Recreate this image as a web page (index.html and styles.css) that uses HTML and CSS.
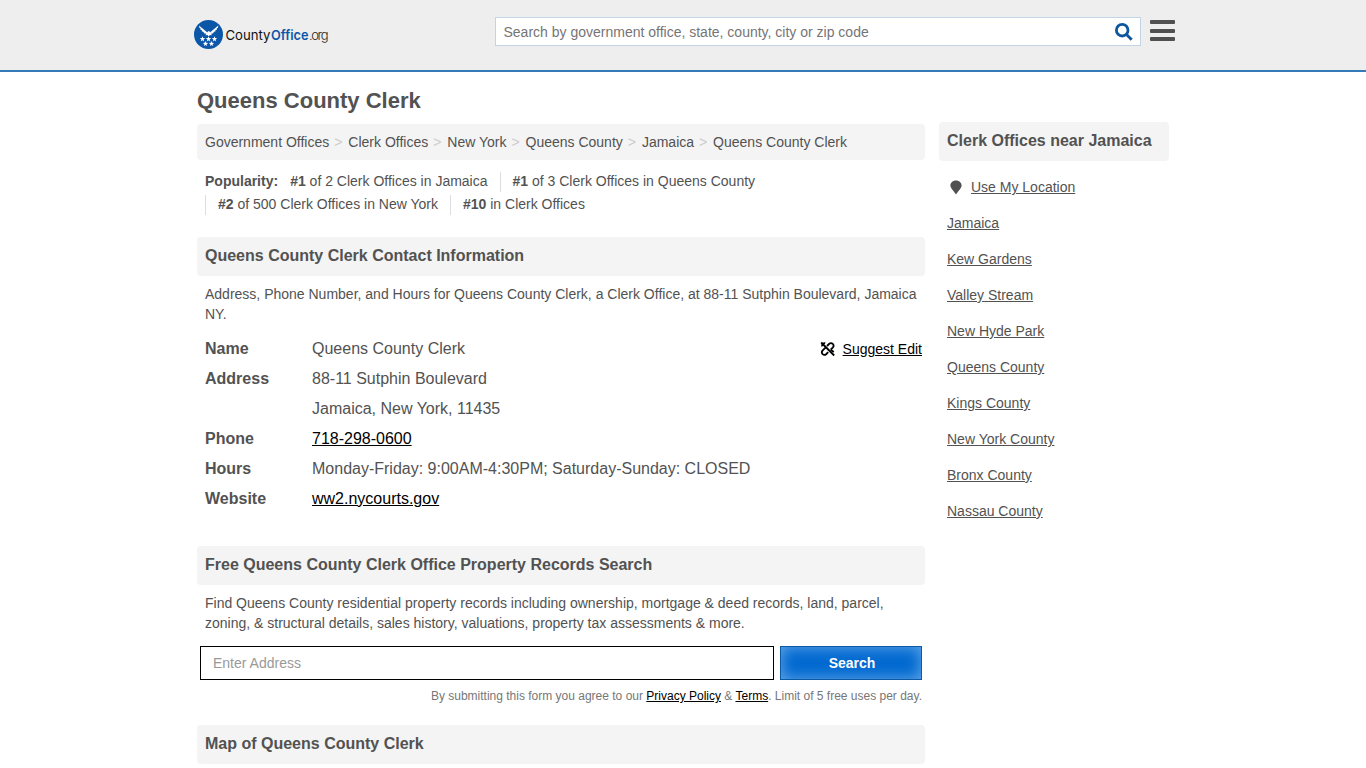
FILE: index.html
```html
<!DOCTYPE html>
<html lang="en">
<head>
    <meta charset="UTF-8">
    <title>Queens County Clerk - CountyOffice.org</title>
    <link rel="stylesheet" href="styles.css">
</head>
<body>
    <div class="header">
        <div class="header-inner">
            <a class="logo" href="#">
                <svg width="146" height="34" viewBox="0 0 146 34">
                    <circle cx="14.5" cy="14.5" r="14.5" fill="#0c56a8"/>
                    <path class="eagle" d="M5 5.500L11.300 10.800L13.300 12.600L14 11.200L15.600 11.300L16 12.500L18 10.800L24.300 5.500L23.800 8L22.800 8.300L22.900 9.800L21.500 10L21.400 11.500L19.800 11.700L19.300 13.200L17 13.800L18 15.300L16 15L14.700 16.300L13.400 15L11.300 15.300L12.400 13.800L10 13.200L9.500 11.700L7.900 11.500L7.800 10L6.400 9.800L6.500 8.300L5.500 8Z"/>
                    <g class="stars">
                        <path id="star" d="M8.500 16.200L9.200 18.100L11.200 18.200L9.600 19.500L10.200 21.400L8.500 20.300L6.800 21.400L7.400 19.500L5.800 18.200L7.800 18.100Z"/>
                        <use href="#star" x="6"/>
                        <use href="#star" x="12"/>
                        <use href="#star" x="3" y="4.700"/>
                        <use href="#star" x="9" y="4.700"/>
                    </g>
                    <text class="logo-county" x="31.500" y="20" textLength="45" lengthAdjust="spacingAndGlyphs">County</text>
                    <text class="logo-office" x="77" y="20" textLength="37.500" lengthAdjust="spacingAndGlyphs">Office</text>
                    <text class="logo-org" x="115" y="20">.org</text>
                </svg>
            </a>
            <form class="site-search">
                <input type="text" placeholder="Search by government office, state, county, city or zip code">
                <svg class="search-icon" width="18" height="18" viewBox="0 0 18 18">
                    <circle cx="7.200" cy="7.200" r="5.800"/>
                    <path d="M11.500 11.500L16.700 16.700"/>
                </svg>
            </form>
            <div class="menu-btn"><span></span><span></span><span></span></div>
        </div>
    </div>

    <div class="container">
        <div class="main">
            <h1>Queens County Clerk</h1>
            <ol class="breadcrumb">
                <li>Government Offices</li>
                <li>Clerk Offices</li>
                <li>New York</li>
                <li>Queens County</li>
                <li>Jamaica</li>
                <li>Queens County Clerk</li>
            </ol>
            <ul class="popularity">
                <li class="first"><b>Popularity:</b></li>
                <li class="first"><b>#1</b> of 2 Clerk Offices in Jamaica</li>
                <li><b>#1</b> of 3 Clerk Offices in Queens County</li>
                <li><b>#2</b> of 500 Clerk Offices in New York</li>
                <li><b>#10</b> in Clerk Offices</li>
            </ul>

            <h2>Queens County Clerk Contact Information</h2>
            <p class="intro">Address, Phone Number, and Hours for Queens County Clerk, a Clerk Office, at 88-11 Sutphin Boulevard, Jamaica NY.</p>
            <div class="contact">
                <dl class="info">
                    <dt>Name</dt><dd>Queens County Clerk</dd>
                    <dt>Address</dt><dd>88-11 Sutphin Boulevard<br>Jamaica, New York, 11435</dd>
                    <dt>Phone</dt><dd><a href="#">718-298-0600</a></dd>
                    <dt>Hours</dt><dd>Monday-Friday: 9:00AM-4:30PM; Saturday-Sunday: CLOSED</dd>
                    <dt>Website</dt><dd><a href="#">ww2.nycourts.gov</a></dd>
                </dl>
                <div class="suggest">
                    <svg width="16" height="16" viewBox="0 0 16 16">
                        <path d="M1.200 1.500L14.200 14.500"/>
                        <path d="M7 5L9 3C11.700 .6 15.100 4 12.700 6.700L10.700 8.700M8.200 11.200L6.400 13C3.700 15.400 .3 12 2.700 9.300L5.800 6.300M5.200 2.300C3.800 1.700 1.800 3 2.100 5.300M10.700 8.700L13.800 11"/>
                    </svg>
                    <a href="#">Suggest Edit</a>
                </div>
            </div>

            <h2>Free Queens County Clerk Office Property Records Search</h2>
            <p class="intro">Find Queens County residential property records including ownership, mortgage &amp; deed records, land, parcel, zoning, &amp; structural details, sales history, valuations, property tax assessments &amp; more.</p>
            <form class="property-search">
                <input type="text" placeholder="Enter Address">
                <button type="button">Search</button>
            </form>
            <p class="terms">By submitting this form you agree to our <a href="#">Privacy Policy</a> &amp; <a href="#">Terms</a>. Limit of 5 free uses per day.</p>

            <h2>Map of Queens County Clerk</h2>
        </div>

        <div class="sidebar">
            <h2>Clerk Offices near Jamaica</h2>
            <ul class="nearby">
                <li>
                    <svg class="pin" width="12" height="15" viewBox="0 0 12 15"><path d="M6 .5C9.200 .5 11.600 2.800 11.600 5.600C11.600 8.300 8.200 11 6 14.500C3.800 11 .4 8.300 .4 5.600C.4 2.800 2.800 .5 6 .5Z"/></svg>
                    <a href="#">Use My Location</a>
                </li>
                <li><a href="#">Jamaica</a></li>
                <li><a href="#">Kew Gardens</a></li>
                <li><a href="#">Valley Stream</a></li>
                <li><a href="#">New Hyde Park</a></li>
                <li><a href="#">Queens County</a></li>
                <li><a href="#">Kings County</a></li>
                <li><a href="#">New York County</a></li>
                <li><a href="#">Bronx County</a></li>
                <li><a href="#">Nassau County</a></li>
            </ul>
        </div>
    </div>
</body>
</html>
```

FILE: styles.css
```css
* {
    margin: 0;
    padding: 0;
    box-sizing: border-box;
}
html {
    overflow: hidden;
}
body {
    font: 14px/20px "Liberation Sans", Arial, sans-serif;
    color: #525252;
    background-color: #fff;
}
ul,ol {
    list-style: none;
}
svg {
    display: block;
}
a {
    color: #000;
}

/* header */
.header {
    height: 72px;
    background-color: #eee;
    border-bottom: 2px solid #337ab7;
}
.header-inner {
    display: flex;
    align-items: flex-start;
    width: 981px;
    margin-left: 194px;
}
.logo {
    margin-top: 20px;
    text-decoration: none;
}
.eagle,.stars {
    fill: #fff;
}
.logo-county,.logo-office {
    font: 13.5px Inter, sans-serif;
    fill: #111;
}
.logo-office {
    font-weight: 600;
    fill: #0c56a8;
}
.logo-org {
    font: 300 13px Inter, sans-serif;
    letter-spacing: -1.4px;
    fill: #222;
}
.site-search {
    display: flex;
    align-items: center;
    width: 646px;
    height: 29px;
    margin: 17px 9px 0 155px;
    padding: 0 7px 0 7.5px;
    background-color: #fff;
    border: 1px solid #c2d5e6;
}
.site-search input {
    flex: 1;
    font: 14px "Liberation Sans", Arial, sans-serif;
    border: 0;
    outline: 0;
}
.site-search input::placeholder {
    color: #757575;
}
.search-icon {
    fill: none;
    stroke: #0c56a0;
    stroke-width: 2.8;
}
.menu-btn {
    display: flex;
    flex-direction: column;
    justify-content: space-between;
    width: 25px;
    height: 21px;
    margin-top: 20px;
}
.menu-btn span {
    height: 4px;
    background-color: #505050;
    border-radius: 1px;
}

/* columns */
.container {
    display: flex;
    gap: 14px;
    width: 972px;
    margin-left: 197px;
}
.main {
    width: 728px;
    padding-top: 17px;
}
.sidebar {
    width: 230px;
    padding-top: 50px;
}
h1 {
    margin-bottom: 11px;
    font-size: 22px;
    line-height: 24px;
}
h2 {
    height: 39px;
    padding: 0 8px;
    font-size: 16px;
    line-height: 37px;
    background-color: #f4f4f4;
    border-radius: 4px;
}

.breadcrumb {
    display: flex;
    height: 36px;
    margin-bottom: 12px;
    padding: 0 8px;
    line-height: 36px;
    background-color: #f4f4f4;
    border-radius: 4px;
}
.breadcrumb li + li::before {
    content: ">";
    padding: 0 5.9px 0 5px;
    color: #ccc;
}
.popularity {
    display: flex;
    flex-wrap: wrap;
    gap: 3px 0;
    margin: 0 100px 22px 8px;
}
.popularity li {
    height: 20px;
    padding: 0 12px;
    line-height: 19px;
    border-left: 1px solid #ddd;
}
.popularity li.first {
    padding-left: 0;
    border-left: 0;
}
.intro {
    padding: 8px 8px 0;
}

/* contact table */
.contact {
    display: flex;
    justify-content: space-between;
    margin-bottom: 32px;
    padding: 10px 3px 0 8px;
}
.info {
    display: grid;
    grid-template-columns: 107px auto;
    font-size: 16px;
    line-height: 30px;
}
.info dt {
    font-weight: bold;
}
.suggest {
    display: flex;
    align-items: center;
    gap: 7px;
    height: 30px;
}
.suggest svg {
    fill: none;
    stroke: #000;
    stroke-width: 1.8;
}

/* property search form */
.property-search {
    display: flex;
    gap: 6px;
    height: 34px;
    margin: 13px 3px 8px;
}
.property-search input {
    flex: 1;
    padding: 0 12px;
    font: 14px "Liberation Sans", Arial, sans-serif;
    border: 1px solid #000;
}
.property-search input::placeholder {
    color: #999;
}
.property-search button {
    width: 142px;
    padding-left: 2px;
    font: bold 14px "Liberation Sans", Arial, sans-serif;
    color: #fff;
    background-color: #0069d0;
    border: 1px solid #0c5aa6;
    box-shadow: inset 0 0 15px #6aaae8;
}
.terms {
    margin-bottom: 21px;
    padding-right: 3px;
    font-size: 12px;
    line-height: 16px;
    text-align: right;
    color: #777;
}

/* nearby offices */
.nearby {
    padding: 8px 8px 0;
}
.nearby li {
    display: flex;
    align-items: center;
    height: 36px;
}
.nearby a {
    color: #525252;
}
.pin {
    margin: 0 9px 0 3px;
    fill: #505050;
}
```
